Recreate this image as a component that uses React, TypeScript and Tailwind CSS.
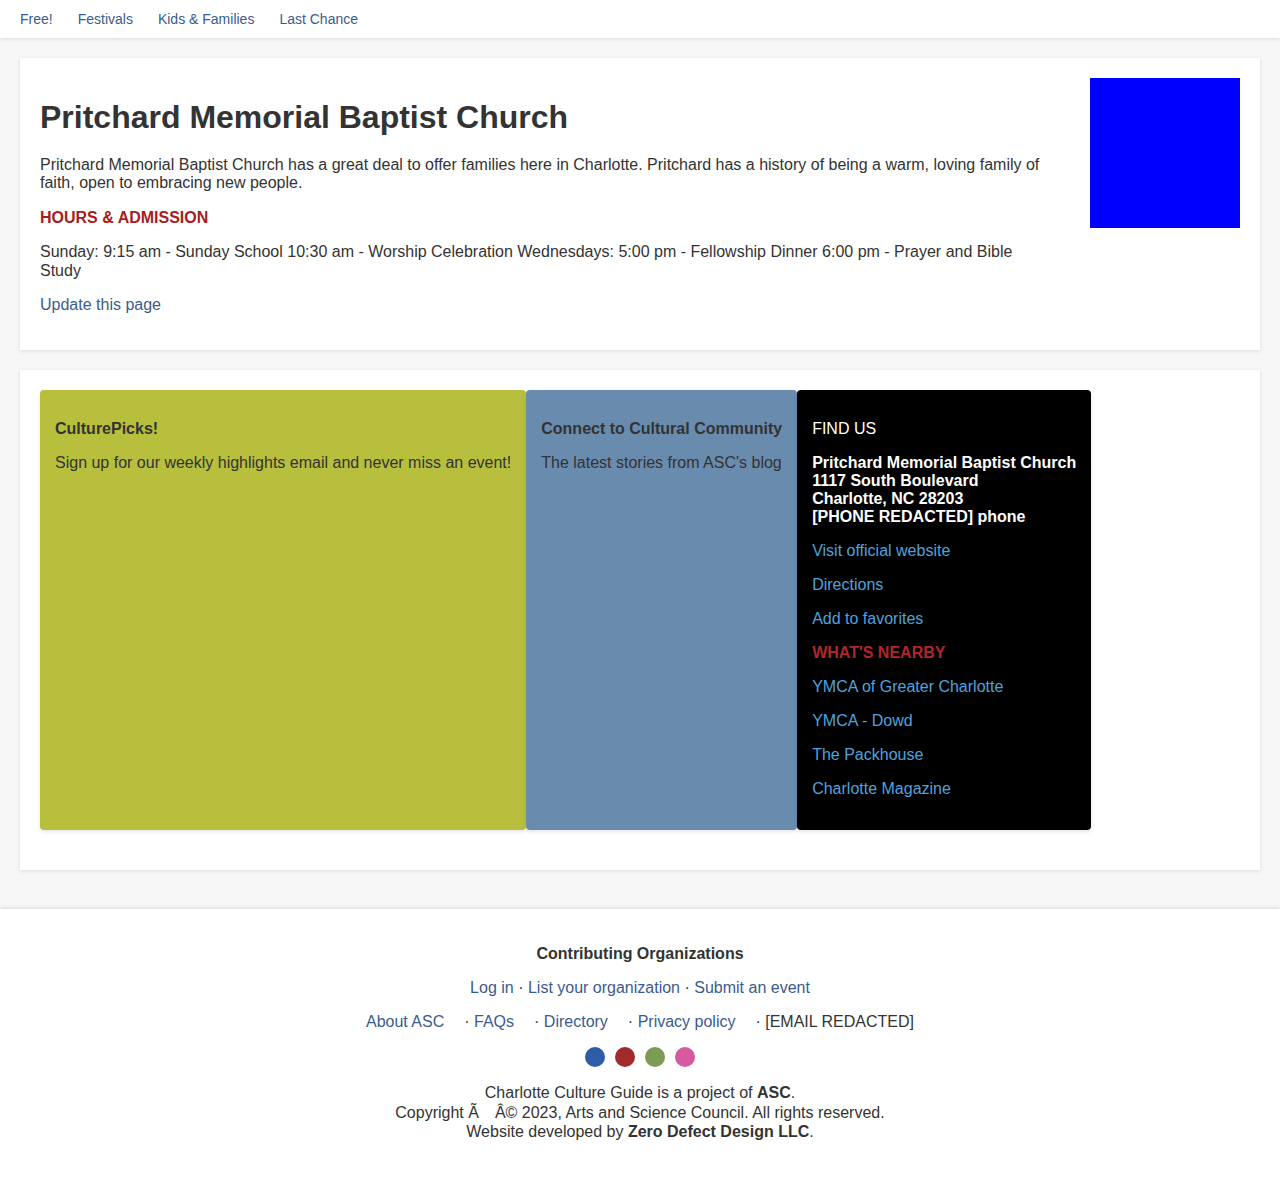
const navLinks = ['Free!', 'Festivals', 'Kids & Families', 'Last Chance']

const nearby = ['YMCA of Greater Charlotte', 'YMCA - Dowd', 'The Packhouse', 'Charlotte Magazine']

const dots = ['bg-[#2f5ca6]', 'bg-[#a32a2a]', 'bg-[#7b9c52]', 'bg-[#d65a9e]']

export default function App() {
	return (
		<div className="min-h-[1178px] bg-[#f7f7f7] font-['Liberation_Sans',Arial,sans-serif] text-[#333] text-base leading-[1.15]">
			{/* Top nav */}
			<nav className="h-[38px] bg-white shadow-[0_1px_4px_rgba(0,0,0,0.12)] flex items-center gap-[25px] px-5 text-sm">
				{navLinks.map(link => (
					<a key={link} className="text-[#3b5b8d]">
						{link}
					</a>
				))}
			</nav>

			<main className="px-5 pt-5">
				{/* Venue card */}
				<section className="bg-white shadow-[0_1px_4px_rgba(0,0,0,0.12)] p-5 flex gap-10">
					<div className="w-[1010px]">
						<h1 className="mt-[21px] mb-[21px] text-[32px] font-bold leading-[36px]">
							Pritchard Memorial Baptist Church
						</h1>
						<p>
							Pritchard Memorial Baptist Church has a great deal to offer families here in Charlotte. Pritchard has a
							history of being a warm, loving family of faith, open to embracing new people.
						</p>
						<h3 className="mt-4 font-bold text-[#a51d22]">HOURS &amp; ADMISSION</h3>
						<p className="mt-4">
							Sunday: 9:15 am - Sunday School 10:30 am - Worship Celebration Wednesdays: 5:00 pm - Fellowship Dinner 6:00
							pm - Prayer and Bible Study
						</p>
						<p className="mt-4 mb-4">
							<a className="text-[#3b5b8d]">Update this page</a>
						</p>
					</div>
					<div className="w-[150px] h-[150px] bg-[#0000ff] shrink-0" />
				</section>

				{/* Panels */}
				<section className="mt-5 bg-white shadow-[0_1px_4px_rgba(0,0,0,0.12)] pt-5 px-5 pb-10 flex leading-[18px]">
					<div className="bg-[#b8bf3c] rounded-[4px] px-[15px] pt-[14px] pb-4 shadow-[0_2px_4px_rgba(0,0,0,0.1)]">
						<p className="my-4 font-bold">CulturePicks!</p>
						<p className="my-4">Sign up for our weekly highlights email and never miss an event!</p>
					</div>
					<div className="bg-[#698bae] rounded-[4px] px-[15px] pt-[14px] pb-4 shadow-[0_2px_4px_rgba(0,0,0,0.1)]">
						<p className="my-4 font-bold">Connect to Cultural Community</p>
						<p className="my-4">The latest stories from ASC's blog</p>
					</div>
					<div className="bg-black text-white rounded-[4px] px-[15px] pt-[14px] pb-4 shadow-[0_2px_4px_rgba(0,0,0,0.1)]">
						<p className="my-4">FIND US</p>
						<p className="my-4 font-bold">
							Pritchard Memorial Baptist Church
							<br />
							1117 South Boulevard
							<br />
							Charlotte, NC 28203
							<br />
							[PHONE REDACTED] phone
						</p>
						<p className="my-4">
							<a className="text-[#4fa3de]">Visit official website</a>
						</p>
						<p className="my-4">
							<a className="text-[#4fa3de]">Directions</a>
						</p>
						<p className="my-4">
							<a className="text-[#4fa3de]">Add to favorites</a>
						</p>
						<p className="my-4 font-bold text-[#b0262b]">WHAT'S NEARBY</p>
						{nearby.map(place => (
							<p key={place} className="my-4">
								<a className="text-[#4fa3de]">{place}</a>
							</p>
						))}
					</div>
				</section>
			</main>

			{/* Footer */}
			<footer className="mt-[39px] bg-white shadow-[0_-1px_4px_rgba(0,0,0,0.12)] pt-5 pb-10 text-center leading-[18px]">
				<p className="my-4 font-bold">Contributing Organizations</p>
				<p className="my-4">
					<a className="text-[#3b5b8d]">Log in</a> · <a className="text-[#3b5b8d]">List your organization</a> ·{' '}
					<a className="text-[#3b5b8d]">Submit an event</a>
				</p>
				<p className="my-4">
					<a className="text-[#3b5b8d]">About ASC</a>
					<span className="ml-5">
						· <a className="text-[#3b5b8d]">FAQs</a>
					</span>
					<span className="ml-5">
						· <a className="text-[#3b5b8d]">Directory</a>
					</span>
					<span className="ml-5">
						· <a className="text-[#3b5b8d]">Privacy policy</a>
					</span>
					<span className="ml-5">· [EMAIL REDACTED]</span>
				</p>
				<div className="my-4 flex justify-center gap-[10px]">
					{dots.map(color => (
						<span key={color} className={`w-5 h-5 rounded-full ${color}`} />
					))}
				</div>
				<p className="leading-[19.5px]">
					Charlotte Culture Guide is a project of <b>ASC</b>.
					<br />
					Copyright Ã{'\u2003'}Â© 2023, Arts and Science Council. All rights reserved.
					<br />
					Website developed by <b>Zero Defect Design LLC</b>.
				</p>
			</footer>
		</div>
	)
}
